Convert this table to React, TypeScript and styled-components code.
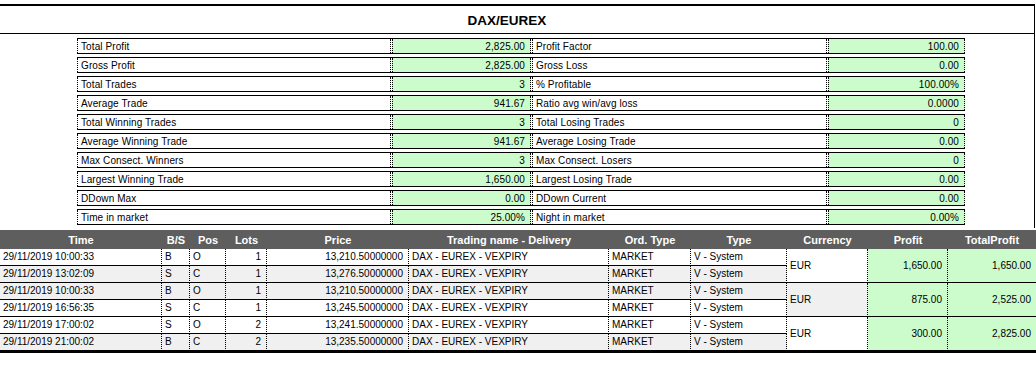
import React from "react";
import styled, { createGlobalStyle } from "styled-components";

const GlobalStyle = createGlobalStyle`
    body {
        margin: 0;
        background: #ffffff;
        font-family: "Liberation Sans", Arial, sans-serif;
        color: #000000;
    }
`

const GREEN = "#ccfccc";
const GREY = "#f0f0f0";
const WHITE = "#ffffff";

const Page = styled.div`
    padding-top: 4px;
    width: 1036px;
`

const TopBox = styled.div`
    width: 1034px;
    border-top: 2px solid #000;
    border-right: 1px solid #000;
`

const Title = styled.div`
    height: 27px;
    line-height: 29px;
    border-bottom: 1px solid #000;
    padding-right: 20px;
    text-align: center;
    font-size: 13.5px;
    font-weight: bold;
`

const Stats = styled.div`
    display: flex;
    flex-direction: column;
    gap: 3px;
    padding: 4px 0 3px 77px;
`

const StatRow = styled.div`
    display: flex;
    gap: 1px;
    width: 888px;
    height: 14px;
    border-top: 1px solid #000;
    border-bottom: 1px solid #000;
`

const StatCell = styled.div<{ $w: number; $value?: boolean }>`
    box-sizing: border-box;
    width: ${({ $w }) => $w}px;
    height: 14px;
    line-height: 16px;
    font-size: 10px;
    letter-spacing: 0.1px;
    border-left: 1px dotted #000;
    border-right: 1px dotted #000;
    background: ${({ $value }) => ($value ? GREEN : WHITE)};
    text-align: ${({ $value }) => ($value ? "right" : "left")};
    padding: ${({ $value }) => ($value ? "0 5px 0 0" : "0 0 0 3px")};
    white-space: nowrap;
    overflow: hidden;
`

const Trades = styled.table`
    margin-top: 2px;
    width: 1036px;
    table-layout: fixed;
    border-collapse: separate;
    border-spacing: 0;
    border-bottom: 2px solid #000;
    font-size: 10px;
`

const HeadCell = styled.th`
    height: 19px;
    padding: 0;
    background: #5e5e5e;
    color: #ffffff;
    font-size: 11px;
    font-weight: bold;
    text-align: center;
    white-space: nowrap;
`

const Cell = styled.td<{ $bg: string; $align?: "left" | "right"; $last?: boolean }>`
    height: 16px;
    line-height: 16px;
    padding: ${({ $align }) => ($align === "right" ? "0 5px 0 0" : "0 0 0 3px")};
    background: ${({ $bg }) => $bg};
    text-align: ${({ $align }) => $align || "left"};
    border-bottom: 1px solid #000;
    border-right: ${({ $last }) => ($last ? "none" : "1px dotted #000")};
    white-space: nowrap;
    overflow: hidden;
`

const stats: [string, string, string, string][] = [
    ["Total Profit", "2,825.00", "Profit Factor", "100.00"],
    ["Gross Profit", "2,825.00", "Gross Loss", "0.00"],
    ["Total Trades", "3", "% Profitable", "100.00%"],
    ["Average Trade", "941.67", "Ratio avg win/avg loss", "0.0000"],
    ["Total Winning Trades", "3", "Total Losing Trades", "0"],
    ["Average Winning Trade", "941.67", "Average Losing Trade", "0.00"],
    ["Max Consect. Winners", "3", "Max Consect. Losers", "0"],
    ["Largest Winning Trade", "1,650.00", "Largest Losing Trade", "0.00"],
    ["DDown Max", "0.00", "DDown Current", "0.00"],
    ["Time in market", "25.00%", "Night in market", "0.00%"],
];

const columns = [
    ["Time", 162], ["B/S", 28], ["Pos", 36], ["Lots", 41], ["Price", 142],
    ["Trading name - Delivery", 200], ["Ord. Type", 82], ["Type", 96],
    ["Currency", 81], ["Profit", 80], ["TotalProfit", 88],
] as const;

type Trade = { time: string; bs: string; pos: string; lots: number; price: string; bg: string };
type Pair = { currency: string; profit: string; total: string; bg: string; trades: Trade[] };

const pairs: Pair[] = [
    {
        currency: "EUR", profit: "1,650.00", total: "1,650.00", bg: WHITE,
        trades: [
            { time: "29/11/2019 10:00:33", bs: "B", pos: "O", lots: 1, price: "13,210.50000000", bg: WHITE },
            { time: "29/11/2019 13:02:09", bs: "S", pos: "C", lots: 1, price: "13,276.50000000", bg: GREY },
        ],
    },
    {
        currency: "EUR", profit: "875.00", total: "2,525.00", bg: GREY,
        trades: [
            { time: "29/11/2019 10:00:33", bs: "B", pos: "O", lots: 1, price: "13,210.50000000", bg: GREY },
            { time: "29/11/2019 16:56:35", bs: "S", pos: "C", lots: 1, price: "13,245.50000000", bg: WHITE },
        ],
    },
    {
        currency: "EUR", profit: "300.00", total: "2,825.00", bg: WHITE,
        trades: [
            { time: "29/11/2019 17:00:02", bs: "S", pos: "O", lots: 2, price: "13,241.50000000", bg: WHITE },
            { time: "29/11/2019 21:00:02", bs: "B", pos: "C", lots: 2, price: "13,235.50000000", bg: GREY },
        ],
    },
];

export default function App() {
    return (
        <Page>
            <GlobalStyle />
            <TopBox>
                <Title>DAX/EUREX</Title>
                <Stats>
                    {stats.map(([l1, v1, l2, v2]) => (
                        <StatRow key={l1}>
                            <StatCell $w={314}>{l1}</StatCell>
                            <StatCell $w={139} $value>{v1}</StatCell>
                            <StatCell $w={295}>{l2}</StatCell>
                            <StatCell $w={137} $value>{v2}</StatCell>
                        </StatRow>
                    ))}
                </Stats>
            </TopBox>
            <Trades>
                <colgroup>
                    {columns.map(([name, w]) => <col key={name} style={{ width: w }} />)}
                </colgroup>
                <thead>
                    <tr>
                        {columns.map(([name]) => <HeadCell key={name}>{name}</HeadCell>)}
                    </tr>
                </thead>
                <tbody>
                    {pairs.map((p) =>
                        p.trades.map((t, i) => (
                            <tr key={t.time + i}>
                                <Cell $bg={t.bg}>{t.time}</Cell>
                                <Cell $bg={t.bg}>{t.bs}</Cell>
                                <Cell $bg={t.bg}>{t.pos}</Cell>
                                <Cell $bg={t.bg} $align="right">{t.lots}</Cell>
                                <Cell $bg={t.bg} $align="right">{t.price}</Cell>
                                <Cell $bg={t.bg}>DAX - EUREX - VEXPIRY</Cell>
                                <Cell $bg={t.bg}>MARKET</Cell>
                                <Cell $bg={t.bg}>V - System</Cell>
                                {i === 0 && (
                                    <>
                                        <Cell $bg={p.bg} rowSpan={2}>{p.currency}</Cell>
                                        <Cell $bg={GREEN} $align="right" rowSpan={2}>{p.profit}</Cell>
                                        <Cell $bg={GREEN} $align="right" rowSpan={2} $last>{p.total}</Cell>
                                    </>
                                )}
                            </tr>
                        ))
                    )}
                </tbody>
            </Trades>
        </Page>
    );
}
